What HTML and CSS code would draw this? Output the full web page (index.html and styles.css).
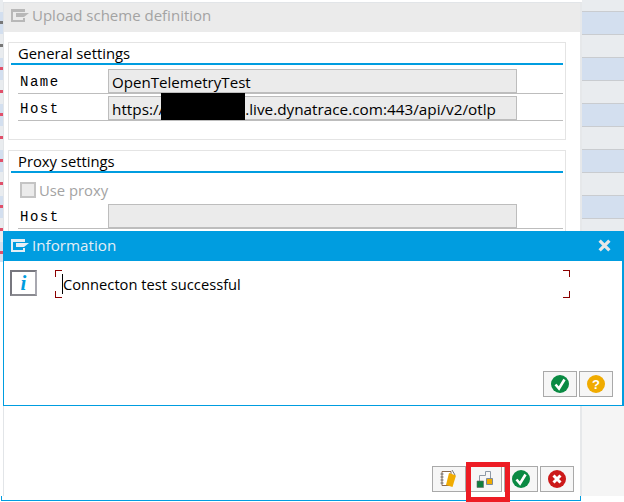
FILE: index.html
```html
<!DOCTYPE html>
<html lang="en">
<head>
<meta charset="utf-8">
<title>Upload scheme definition</title>
<link rel="stylesheet" href="styles.css">
</head>
<body>
<div class="desktop">
  <div class="backdrop">
    <div class="stripes"></div>
    <div class="left-stripes"></div>
    <div class="back-text">WAN Client WAN Client</div>
    <div class="right-panel"></div>
  </div>

  <section class="window upload">
    <header class="upload-title">
      <svg class="win-icon" viewBox="0 0 18 13"><path d="M0 0h14v3H2v8h10V9h2v4H0z" fill="#b8b8b8"/><path d="M5 4h13l-5 4H5z" fill="#b8b8b8"/></svg>
      <span>Upload scheme definition</span>
    </header>
    <div class="upload-body">
      <section class="group general">
        <h2 class="group-title">General settings</h2>
        <div class="row">
          <label class="row-label">Name</label>
          <div class="field">OpenTelemetryTest</div>
        </div>
        <div class="row">
          <label class="row-label">Host</label>
          <div class="field field-url">https://<span class="redact"></span>.live.dynatrace.com:443/api/v2/otlp</div>
        </div>
      </section>
      <section class="group proxy">
        <h2 class="group-title">Proxy settings</h2>
        <div class="check-row"><span class="checkbox"></span><span>Use proxy</span></div>
        <div class="row">
          <label class="row-label">Host</label>
          <div class="field"></div>
        </div>
      </section>
    </div>
    <footer class="upload-actions">
      <button class="tool" type="button" aria-label="Display">
        <svg viewBox="0 0 20 20" width="20" height="20"><path d="M3 2.500h9v14H3z" fill="#fff" stroke="#8a6a50"/><path d="M1.500 5h3M1.500 8h3M1.500 11h3M1.500 14h3" stroke="#666"/><path d="M10 4l7 2.500-3.500 11.500-6.500-2z" fill="#f0ab00"/><path d="M13 1l3 5" stroke="#777"/></svg>
      </button>
      <button class="tool tool-test" type="button" aria-label="Test connection">
        <svg viewBox="0 0 20 20" width="20" height="20"><path d="M5.500 12V6.500h6v-4h5V9" fill="none" stroke="#8e99a5"/><path d="M3 12h6.500v6.500H3z" fill="#107e3e" stroke="#666" stroke-width=".6"/><path d="M12.500 9.500h6v6h-6z" fill="#f0ab00" stroke="#7d8b99"/></svg>
      </button>
      <button class="tool" type="button" aria-label="Confirm">
        <svg class="round" viewBox="0 0 18 18"><circle cx="9" cy="9" r="9" fill="#0a8a43"/><path d="M4.500 9.500l3.500 4 5.500-9" fill="none" stroke="#fff" stroke-width="2.600"/></svg>
      </button>
      <button class="tool" type="button" aria-label="Cancel">
        <svg class="round" viewBox="0 0 18 18"><circle cx="9" cy="9" r="9" fill="#cc1919"/><path d="M5.500 5.500l7 7M12.500 5.500l-7 7" stroke="#fff" stroke-width="3"/></svg>
      </button>
    </footer>
  </section>
  <div class="frame-corner"></div>

  <section class="window info">
    <header class="info-title">
      <svg class="win-icon" viewBox="0 0 18 13"><path d="M0 0h14v3H2v8h10V9h2v4H0z" fill="#e4eef5"/><path d="M5 4h13l-5 4H5z" fill="#e4eef5"/></svg>
      <span class="info-heading">Information</span>
      <svg class="close" viewBox="0 0 12 12"><path d="M1.500 1.500l9 9M10.500 1.500l-9 9" stroke="#e6e6e6" stroke-width="3"/></svg>
    </header>
    <div class="info-body">
      <div class="info-icon"><span>i</span></div>
      <div class="message"><span class="message-text">Connecton test successful</span></div>
    </div>
    <footer class="info-actions">
      <button class="tool" type="button" aria-label="Yes">
        <svg class="round" viewBox="0 0 18 18"><circle cx="9" cy="9" r="9" fill="#0a8a43"/><path d="M4.500 9.500l3.500 4 5.500-9" fill="none" stroke="#fff" stroke-width="2.600"/></svg>
      </button>
      <button class="tool" type="button" aria-label="Help">
        <svg class="round" viewBox="0 0 18 18"><circle cx="9" cy="9" r="9" fill="#f0ab00"/><text x="9" y="13.500" class="help-mark">?</text></svg>
      </button>
    </footer>
  </section>

  <div class="highlight"></div>
</div>
</body>
</html>
```

FILE: styles.css
```css
* { box-sizing: border-box; }
html, body { margin: 0; padding: 0; background: #fff; }
body { font-family: "Open Sans", "Noto Sans", "Liberation Sans", sans-serif; color: #000; }
.desktop { position: relative; width: 624px; height: 502px; overflow: hidden; }

.backdrop { position: absolute; inset: 0; }
.stripes {
  position: absolute; left: 582px; top: 0; width: 42px; height: 231px;
  background: repeating-linear-gradient(to bottom,
    #e9ecef 0, #e9ecef 11px, #c9ccd0 11px, #c9ccd0 12px,
    #d3dfef 12px, #d3dfef 34px, #c9ccd0 34px, #c9ccd0 35px,
    #e9ecef 35px, #e9ecef 46px);
}
.left-stripes {
  position: absolute; left: 0; top: 0; width: 3px; height: 262px;
  background: repeating-linear-gradient(to bottom, #e9ecef 0, #e9ecef 12px, #d3dfef 12px, #d3dfef 34px, #e9ecef 34px, #e9ecef 46px);
}
.left-stripes::before {
  content: ""; position: absolute; left: 0; top: 21px; width: 3px; height: 27px;
  background: repeating-linear-gradient(to bottom, #777 0, #777 3px, transparent 3px, transparent 23px);
}
.left-stripes::after {
  content: ""; position: absolute; left: 0; top: 67px; width: 3px; height: 190px;
  background: repeating-linear-gradient(to bottom, #e0506a 0, #e0506a 3px, transparent 3px, transparent 23px);
}
.back-text {
  position: absolute; left: 162px; top: -11px; width: 250px;
  font: 13px/14px "Liberation Mono", monospace; color: #111; letter-spacing: 1px;
}
.right-panel {
  position: absolute; left: 582px; top: 406px; width: 42px; height: 90px; background: #f5f5f5;
}

.window { position: absolute; background: #fff; }

.upload {
  left: 3px; top: 2px; width: 579px; height: 494px;
  border: 1px solid #e2e5e8; border-bottom: 0; border-right: 2px solid #e6e8ea;
  display: flex; flex-direction: column;
}
.frame-corner {
  position: absolute; left: 1px; top: 496px; width: 580px; height: 5px;
  border: 1px solid #009de0; border-top: 0; background: #fff;
}
.upload-title {
  height: 29px; flex: none; background: #ebebeb; display: flex; align-items: center;
  color: #a3a3a3; font-size: 15px; padding: 0 0 5px 7px; gap: 3px;
}
.win-icon { width: 18px; height: 13px; flex: none; }
.upload-body { flex: 1; padding: 10px 14px 0 4px; display: flex; flex-direction: column; gap: 10px; }
.group { border: 1px solid #e4e4e4; padding: 0 2px; }
.general { height: 98px; }
.proxy { height: 90px; border-bottom: 0; }
.group-title {
  margin: 0; height: 22px; padding: 1px 0 0 7px; border-bottom: 2px solid #009de0;
  font-size: 14.8px; line-height: 18px; font-weight: 400;
}
.row { display: flex; height: 25px; margin: 4px 0 0 7px; border-bottom: 1px solid #bdbdbd; }
.row + .row { margin-top: 2px; }
.row-label { width: 90px; padding: 5px 0 0 2px; font: 14px/17px "Liberation Mono", monospace; letter-spacing: 1.5px; }
.field {
  width: 409px; height: 25px; background: #ebebeb; border: 1px solid #bdbdbd; border-bottom-width: 2px;
  font-size: 15.1px; line-height: 24px; padding-left: 3px; white-space: nowrap; display: flex;
}
.field-url { font-size: 15.3px; }
.redact { width: 84px; height: 27px; margin: -4px 0 0 -3px; background: #000; flex: none; position: relative; }
.check-row { display: flex; align-items: center; gap: 3px; height: 20px; margin: 7px 0 0 9px; color: #a3a3a3; font-size: 14.8px; }
.checkbox { width: 16px; height: 16px; background: #ebebeb; border: 2px solid #c4c4c4; flex: none; }
.proxy .row { margin-top: 4px; }

.upload-actions { display: flex; justify-content: flex-end; gap: 2px; padding: 0 6px 4px 0; position: relative; }
.upload-actions .tool:first-child { margin-right: -2px; }
.tool {
  width: 34px; height: 26px; padding: 0; background: #f6f6f6; border: 1px solid #a9a9a9;
  display: flex; align-items: center; justify-content: center;
}
.tool-test { width: 36px; }
.round { width: 18px; height: 18px; }
.help-mark { font: 700 13px "Liberation Sans", sans-serif; fill: #fff; text-anchor: middle; }

.info {
  left: 3px; top: 231px; width: 621px; height: 175px;
  border: 1px solid #009de0; border-top: 0; border-right-width: 2px;
  display: flex; flex-direction: column;
}
.info-title {
  height: 30px; flex: none; background: #009de0; display: flex; align-items: center;
  color: #e4eef5; font-size: 15.2px; padding: 0 11px 2px 7px; gap: 3px;
}
.info-heading { flex: 1; }
.close { width: 13px; height: 13px; }
.info-body { flex: 1; display: flex; align-items: flex-start; padding: 9px 52px 0 6px; }
.info-icon {
  width: 27px; height: 26px; border: 2px solid #77777f; border-right-color: #a8a8b0; border-bottom-color: #8a8a90;
  display: flex; align-items: center; justify-content: center; flex: none;
  font: italic 700 21px/1 "Liberation Serif", serif; color: #009de0;
}
.message {
  position: relative; margin-left: 18px; width: 516px; height: 28px; padding: 3px 0 0 7px;
  font-size: 14.7px; line-height: 22px;
  background:
    linear-gradient(#8b0000,#8b0000) 0 0/7px 1px no-repeat,
    linear-gradient(#8b0000,#8b0000) 0 0/1px 7px no-repeat,
    linear-gradient(#8b0000,#8b0000) 0 100%/7px 1px no-repeat,
    linear-gradient(#8b0000,#8b0000) 0 100%/1px 7px no-repeat,
    linear-gradient(#8b0000,#8b0000) 100% 0/7px 1px no-repeat,
    linear-gradient(#8b0000,#8b0000) 100% 0/1px 7px no-repeat,
    linear-gradient(#8b0000,#8b0000) 100% 100%/7px 1px no-repeat,
    linear-gradient(#8b0000,#8b0000) 100% 100%/1px 7px no-repeat;
}
.message-text { display: inline-block; border-left: 1px solid #000; line-height: 20px; }
.info-actions { display: flex; justify-content: flex-end; gap: 2px; padding: 0 9px 8px 0; }

.highlight {
  position: absolute; left: 466px; top: 462px; width: 44px; height: 40px;
  border: 5px solid #ed1c24;
}
```
